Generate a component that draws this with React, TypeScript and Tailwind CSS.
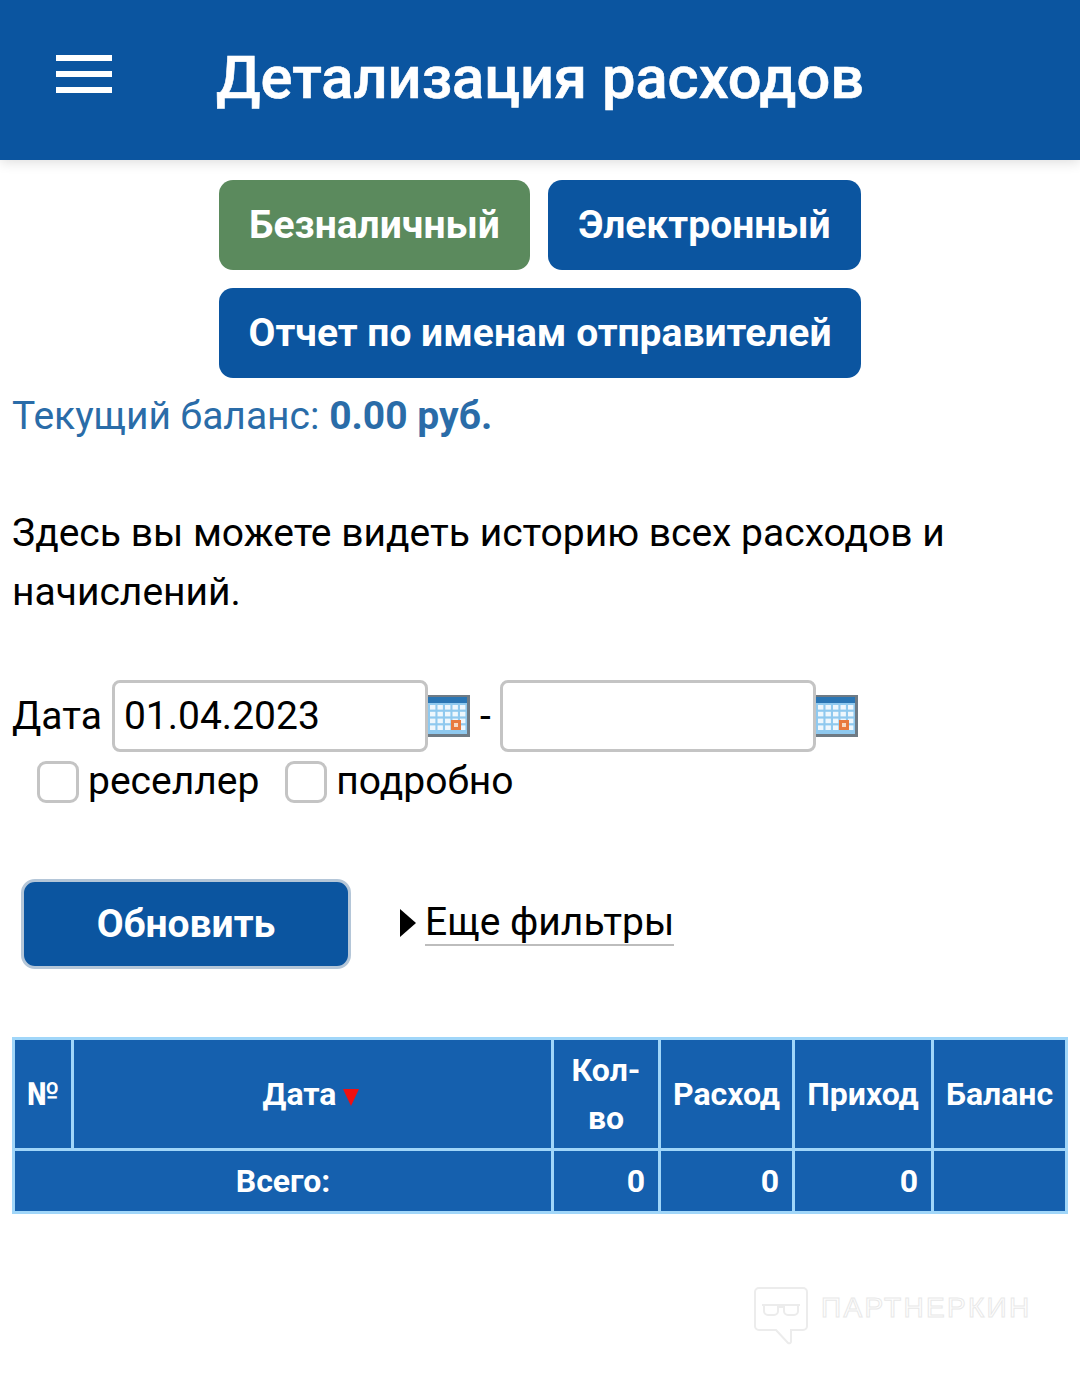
import React from "react";

function Cal() {
  const cells = [];
  for (let r = 0; r < 4; r++) {
    for (let c = 0; c < 5; c++) {
      cells.push(<rect key={`${r}-${c}`} x={2 + c * 7.5} y={10 + r * 6.8} width={5.4} height={4.6} fill="#ffffff" opacity="0.85" />);
    }
  }
  return (
    <svg width="42" height="42" viewBox="0 0 42 42" className="shrink-0 block">
      <rect x="0" y="0" width="42" height="42" fill="#6f7b85" />
      <rect x="0" y="2" width="39" height="37" fill="#8fc9ef" />
      <rect x="0" y="2" width="39" height="6" fill="#2a76b5" />
      {cells}
      <rect x="23" y="25" width="10" height="10" fill="#e8793f" />
      <rect x="26" y="28" width="4" height="4" fill="#f7d9c4" />
    </svg>
  );
}

function Check() {
  return <span className="block w-[42px] h-[42px] rounded-[9px] border-[3px] border-[#c4c4c4] bg-white shrink-0" />;
}

function Hamburger() {
  return (
    <div className="flex flex-col gap-[10px] w-[56px] shrink-0 mb-[12px]">
      <span className="block h-[6px] bg-white" />
      <span className="block h-[6px] bg-white" />
      <span className="block h-[6px] bg-white" />
    </div>
  );
}

const btn = "flex items-center justify-center h-[90px] rounded-[14px] text-white font-bold text-[39px] bg-[#0b55a0]";
const th = "border-[3px] border-[#a0d6f9] font-bold text-center align-middle p-0";
const td = "border-[3px] border-[#a0d6f9] font-bold text-right align-middle pr-[13px]";

export default function App() {
  return (
    <div className="w-[1080px] h-[1397px] bg-white overflow-hidden font-['Roboto',sans-serif] text-black">
      <header className="h-[160px] bg-[#0b55a0] flex items-center pl-[56px] shadow-[0_2px_12px_rgba(0,0,0,0.14)]">
        <Hamburger />
        <h1 className="ml-[104px] mb-[3px] text-white font-medium text-[59.6px] leading-none [-webkit-text-stroke:0.6px_white]">Детализация расходов</h1>
      </header>

      <div className="pt-[20px] flex flex-col items-center gap-[18px]">
        <div className="flex gap-[18px]">
          <div className={`${btn} w-[311px] !bg-[#5b8a5d]`}>Безналичный</div>
          <div className={`${btn} w-[313px]`}>Электронный</div>
        </div>
        <div className={`${btn} w-[642px]`}>Отчет по именам отправителей</div>
      </div>

      <div className="px-[12px]">
        <p className="mt-[15px] text-[39px] leading-[46px] text-[#2a6ca8]">
          Текущий баланс: <b className="font-bold">0.00 руб.</b>
        </p>
        <p className="mt-[65px] text-[39px] leading-[59px]">
          Здесь вы можете видеть историю всех расходов и начислений.
        </p>

        <div className="mt-[58px] flex items-center h-[72px]">
          <span className="text-[39px] leading-none mr-[10px]">Дата</span>
          <div className="w-[316px] h-[72px] rounded-[8px] border-[3px] border-[#c4c4c4] flex items-center pl-[9px] text-[39px]">01.04.2023</div>
          <Cal />
          <span className="text-[39px] ml-[10px] mr-[9px]">-</span>
          <div className="w-[316px] h-[72px] rounded-[8px] border-[3px] border-[#c4c4c4]" />
          <Cal />
        </div>

        <div className="mt-[8px] pl-[25px] flex items-center h-[44px] text-[39px]">
          <Check />
          <span className="ml-[9px] mb-[1px]">реселлер</span>
          <span className="w-[26px]" />
          <Check />
          <span className="ml-[9px] mb-[1px]">подробно</span>
        </div>

        <div className="mt-[75px] pl-[9px] flex items-center">
          <div className="w-[330px] h-[90px] rounded-[14px] bg-[#0b55a0] border-[3px] border-[#b4c6d8] flex items-center justify-center text-white font-bold text-[39px]">Обновить</div>
          <div className="ml-[49px] mb-[2px] flex items-center text-[39px]">
            <span className="w-0 h-0 border-y-[14px] border-y-transparent border-l-[16px] border-l-black mr-[9px]" />
            <span className="border-b-2 border-[#bdbdbd] leading-[44px]">Еще фильтры</span>
          </div>
        </div>

        <table className="mt-[68px] w-[1053px] table-fixed border-collapse bg-[#1560ae] text-white text-[32px]">
          <colgroup>
            <col className="w-[59px]" />
            <col className="w-[480px]" />
            <col className="w-[107px]" />
            <col className="w-[134px]" />
            <col className="w-[139px]" />
            <col className="w-[134px]" />
          </colgroup>
          <tbody>
            <tr className="h-[111px]">
              <td className={th}>№</td>
              <td className={`${th} !pr-[3px]`}>
                Дата<span className="inline-block ml-[7px] align-[-1px] w-0 h-0 border-x-[8px] border-x-transparent border-t-[17px] border-t-[#f01010]" />
              </td>
              <td className={`${th} leading-[48px]`}>Кол-<br />во</td>
              <td className={th}>Расход</td>
              <td className={th}>Приход</td>
              <td className={th}>Баланс</td>
            </tr>
            <tr className="h-[63px]">
              <td colSpan={2} className={th}>Всего:</td>
              <td className={td}>0</td>
              <td className={td}>0</td>
              <td className={td}>0</td>
              <td className={td}></td>
            </tr>
          </tbody>
        </table>

        <div className="mt-[72px] ml-[741px] flex items-start">
          <svg width="56" height="60" viewBox="0 0 56 60" fill="none" stroke="#ececec" strokeWidth="2" className="shrink-0">
            <path d="M6 2h44a4 4 0 0 1 4 4v34a4 4 0 0 1-4 4H38v12a2 2 0 0 1-3 1L23 44H6a4 4 0 0 1-4-4V6a4 4 0 0 1 4-4z" />
            <path d="M9 19h38M11 19v6a4 4 0 0 0 4 4h6a4 4 0 0 0 4-4v-4h6v4a4 4 0 0 0 4 4h6a4 4 0 0 0 4-4v-6" />
          </svg>
          <span className="ml-[12px] mt-[4px] text-[28px] tracking-[2.3px] leading-[36px] font-['Liberation_Sans',sans-serif] text-transparent [-webkit-text-stroke:1px_#e8e8e8]">ПАРТНЕРКИН</span>
        </div>
      </div>
    </div>
  );
}
